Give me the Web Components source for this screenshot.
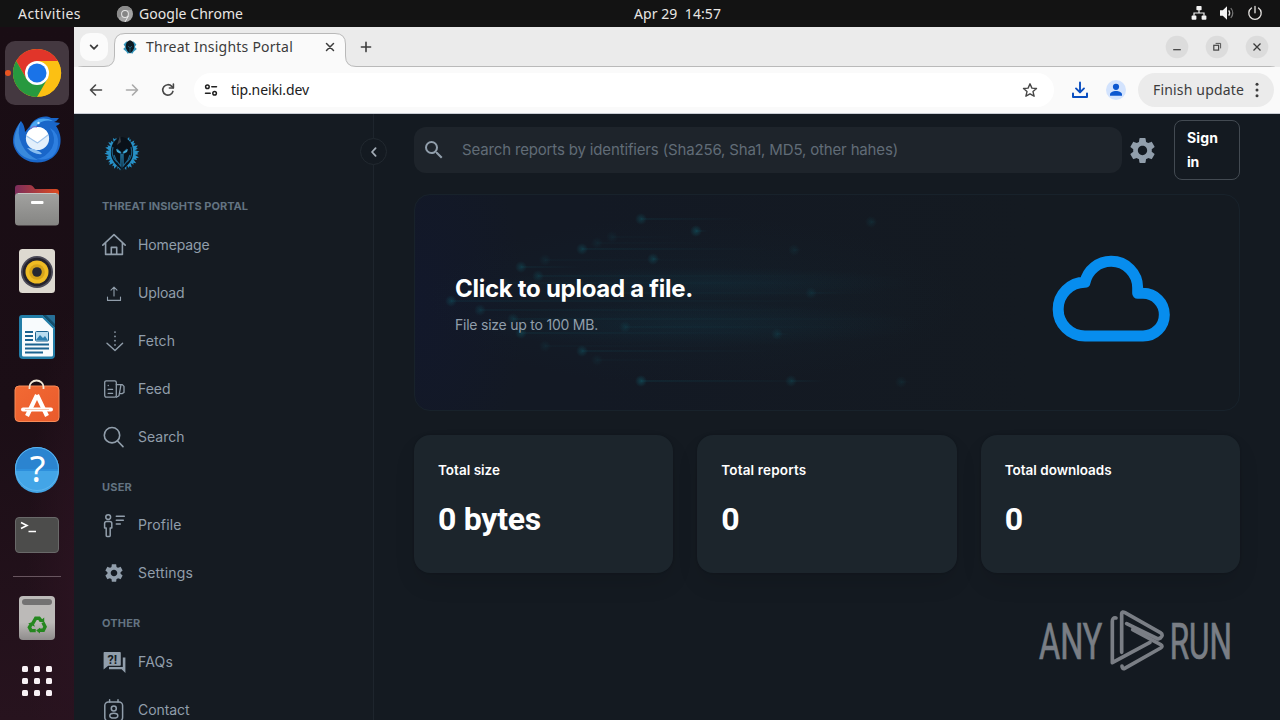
<!DOCTYPE html>
<html lang="en">
<head>
<meta charset="utf-8">
<title>Threat Insights Portal</title>
<style>
  html, body { margin: 0; height: 100%; overflow: hidden; background: #141a21; }
</style>
</head>
<body>
<desktop-shell></desktop-shell>

<script>
// ═══════════════════════════════════════════════════════════════
// Icons — name → [viewBox, body], drawn by <ui-icon>
// ═══════════════════════════════════════════════════════════════

const COG = 'M19.14 12.94c.04-.3.06-.61.06-.94 0-.32-.02-.64-.07-.94l2.03-1.58c.18-.14.23-.41.12-.61l-1.92-3.32c-.12-.22-.37-.29-.59-.22l-2.39.96c-.5-.38-1.03-.7-1.62-.94l-.36-2.54c-.04-.24-.24-.41-.48-.41h-3.84c-.24 0-.43.17-.47.41l-.36 2.54c-.59.24-1.13.57-1.62.94l-2.39-.96c-.22-.08-.47 0-.59.22L2.74 8.87c-.12.21-.08.47.12.61l2.03 1.58c-.05.3-.09.63-.09.94s.02.64.07.94l-2.03 1.58c-.18.14-.23.41-.12.61l1.92 3.32c.12.22.37.29.59.22l2.39-.96c.5.38 1.03.7 1.62.94l.36 2.54c.05.24.24.41.48.41h3.84c.24 0 .44-.17.47-.41l.36-2.54c.59-.24 1.13-.56 1.62-.94l2.39.96c.22.08.47 0 .59-.22l1.92-3.32c.12-.22.07-.47-.12-.61l-2.01-1.58zM12 15.6c-1.98 0-3.6-1.62-3.6-3.6s1.62-3.6 3.6-3.6 3.6 1.62 3.6 3.6-1.62 3.6-3.6 3.6z';

const line = (body, w = 1.5) =>
  `<g fill="none" stroke="currentColor" stroke-width="${w}" stroke-linecap="round" stroke-linejoin="round">${body}</g>`;

const spikes = Array.from({ length: 16 }, (_, i) => {
  const a = 28 + i * 20.3;
  return `<path d="M-3.2-10 L-1.2-17.5 L.4-15 L1.6-16.5 L2.8-10z" transform="rotate(${a})"/>`;
}).join('');

const ICONS = {
  // sidebar
  home: ['0 0 24 24', line('<path d="M.8 12.1 12 1.6l11.2 10.5M3.6 10.2v11.2h16.8V10.2M9.3 21v-6.6h5.4V21"/>', 1.6)],
  upload: ['0 0 24 24', line('<path d="M5.5 16v3.4h13V16M12 15V6.4M9 9.2l3-3 3 3"/>', 1.1)],
  fetch: ['0 0 24 24', line('<path d="M5 14.2l8 7.2 7.6-7.2" stroke-width="1.4"/><path d="M13 3v17" stroke-dasharray=".1 4.2" stroke-width="1.7"/>')],
  feed: ['0 0 24 24', line('<rect x="2.7" y="3.8" width="11.6" height="16.4" rx="1.6"/><path d="M14.3 7.6h6l1.7 1.8v6.1l-2 1.1h-2.2M14.3 20.2l2.7-1.5 2-11M6.2 8.5h.1M6.2 12.4h4.4M6.2 16.4h4.4"/>', 1.3)],
  search: ['0 0 24 24', line('<circle cx="10" cy="10.2" r="7.7"/><path d="m15.600 16 5.400 5.600"/>', 1.6)],
  profile: ['0 0 24 24', line('<circle cx="6.2" cy="4.1" r="2.4"/><path d="M4.2 22.600v-7.600H2.600v-4.500c0-1.200.8-1.900 2-1.900h3.200c1.200 0 2 .7 2 1.900v4.500H8.200v7.600c0 .5-.2.800-.8.800H5c-.6 0-.8-.3-.8-.8z"/><path d="M14.300 3.200h8M14.300 7.200h7M14.300 11h4"/>', 1.5)],
  cog: ['0 0 24 24', `<path fill="currentColor" d="${COG}"/>`],
  faq: ['0 0 24 24', '<path fill="currentColor" d="M2.6 2h15.2c.6 0 1 .4 1 1v11.8c0 .6-.4 1-1 1H6.2L1.600 19.600V3c0-.6.4-1 1-1z"/><path fill="currentColor" d="M20.800 7.500h2.600v15.600l-3.800-3.800H7v-2.200h13.800z"/><text x="10.400" y="13.600" text-anchor="middle" font-family="Roboto, sans-serif" font-weight="700" font-size="12.500" fill="#161c23">?!</text>'],
  contact: ['0 0 24 24', line('<rect x="2.8" y="4" width="17.800" height="19" rx="3.600"/><path d="M7.600 1.800V4M16 1.800V4"/><circle cx="11.800" cy="10.600" r="2.500"/><ellipse cx="11.800" cy="17.700" rx="4" ry="2.400"/>', 1.5)],
  chevron: ['0 0 16 16', line('<path d="M9.6 4.2 6 8l3.6 3.8"/>', 1.8)],
  magnify: ['0 0 24 24', '<path fill="currentColor" d="M15.5 14h-.79l-.28-.27A6.47 6.47 0 0 0 16 9.5 6.5 6.5 0 1 0 9.5 16c1.61 0 3.09-.59 4.23-1.57l.27.28v.79l5 4.99L20.49 19zm-6 0A4.5 4.5 0 1 1 14 9.5 4.5 4.5 0 0 1 9.5 14z"/>'],
  cloud: ['630 415 366 272', '<path fill="none" stroke="#078dee" stroke-width="33" stroke-linejoin="round" d="M735 664H909A64 64 0 0 0 909 536H893V519A79 79 0 0 0 814 440A80 80 0 0 0 735 503A80.500 80.500 0 0 0 735 664z"/>'],
  logo: ['-18 -18 36 36', `<g fill="#2790c6">${spikes}</g><path d="M0-16C8-15 12-7 11 2 10 8 6 12 0 17-6 12-10 8-11 2-12-7-8-15 0-16z" fill="#0a1119"/><path d="M-9-6Q-12 3-5 9M9-6Q12 3 5 9" fill="none" stroke="#1d5f83" stroke-width="1.2"/><path d="M-5-4-1.2-.2V13L-6 7-8 2M5-4 1.2-.2V13L6 7 8 2" fill="none" stroke="#1b658e" stroke-width="1.2"/><path d="M-6-4-1-1-2 .6-5-1zM6-4 1-1 2 .6 5-1z" fill="#40a9d6"/><path d="M-.8 1h1.6L0 18z" fill="#277aa3"/><path d="M-2-17-5-8-1-11z" fill="#3a3f45"/>`],

  // browser
  down: ['0 0 16 16', line('<path d="M4.6 6.4 8 9.8l3.4-3.4"/>', 1.7)],
  close: ['0 0 16 16', line('<path d="m4.5 4.5 7 7m0-7-7 7"/>', 1.5)],
  plus: ['0 0 16 16', line('<path d="M8 3.400v9.200M3.400 8h9.200"/>', 1.6)],
  back: ['0 0 16 16', line('<path d="M13.5 8h-11M7.5 3 2.5 8l5 5"/>', 1.6)],
  forward: ['0 0 16 16', line('<path d="M2.5 8h11M8.5 3l5 5-5 5"/>', 1.6)],
  reload: ['0 0 16 16', line('<path d="M12.9 9.4A5.2 5.2 0 1 1 11.8 4.4l1.4 1.3"/><path d="M13.4 2v4H9.4"/>', 1.6)],
  tune: ['0 0 16 16', line('<circle cx="4.4" cy="4.8" r="1.8"/><path d="M8.8 4.8h4.7M2.5 11.2h4.7"/><circle cx="11.6" cy="11.2" r="1.8"/>', 1.5)],
  star: ['0 0 16 16', line('<path d="m8 1.8 1.9 4.3 4.6.4-3.5 3.1 1.1 4.6L8 11.8l-4.1 2.4L5 9.6 1.5 6.5l4.6-.4z"/>', 1.4)],
  download: ['0 0 18 18', line('<path d="M9 1.5v9.6M5 7.4l4 4 4-4"/><path d="M2 12.5V16h14v-3.5" stroke-width="2"/>', 1.9)],
  person: ['0 0 20 20', '<circle cx="10" cy="10" r="10" fill="#d3e3fd"/><circle cx="10" cy="6.8" r="3.1" fill="#0b57d0"/><path d="M4 15.8v-1.3c0-2.4 3-3.6 6-3.6s6 1.2 6 3.6v1.3z" fill="#0b57d0"/>'],
  dots: ['0 0 16 16', '<g fill="currentColor"><circle cx="8" cy="2.3" r="1.5"/><circle cx="8" cy="8" r="1.5"/><circle cx="8" cy="13.7" r="1.5"/></g>'],
  min: ['0 0 24 24', '<circle cx="12" cy="12" r="11.3" fill="#dcdcdc"/><path d="M8.2 14.7h7.6" stroke="#3a3a3a" stroke-width="1.2"/>'],
  restore: ['0 0 24 24', '<circle cx="12" cy="12" r="11.3" fill="#dcdcdc"/><g fill="none" stroke="#444" stroke-width="1.2"><rect x="8.8" y="10.3" width="4.8" height="4.8"/><path d="M10.6 8.4h5v5" stroke-width=".9"/></g>'],
  shut: ['0 0 24 24', '<circle cx="12" cy="12" r="11.3" fill="#dcdcdc"/><path d="m8.5 8.5 7 7m0-7-7 7" stroke="#3a3a3a" stroke-width="1.3"/>'],
  favicon: ['-20 -20 40 40', '<path d="M-16-6-12 0-17 5-9 12-6 17 0 14 6 17 9 12 17 5 12 0 16-6 9-14 0-12-9-14z" fill="#3496bd"/><path d="M0-17C9-15 12-5 10 3 8 9 5 12 0 16-5 12-8 9-10 3-12-5-9-15 0-17z" fill="#0b1922"/><path d="M-5-2 0 2 5-2M0 3v12" stroke="#226b8c" stroke-width="2" fill="none"/>'],

  // panel
  chromeMono: ['-8 -8 16 16', '<circle r="8" fill="#a3a3a3"/><path d="M0-8A8 8 0 0 0-7 4L-3 2A4 4 0 0 1 0-4H7A8 8 0 0 0 0-8z" fill="#8a8a8a"/><circle r="3.9" fill="#e6e6e6"/><circle r="2.9" fill="#858585"/><path d="M3.5 1.8 0 8" stroke="#e6e6e6"/>'],
  network: ['0 0 16 16', '<g fill="#f2f2f2"><rect x="5.4" y="1" width="5.2" height="4.2" rx=".8"/><rect x=".6" y="10.6" width="4.8" height="4.2" rx=".8"/><rect x="10.6" y="10.6" width="4.8" height="4.2" rx=".8"/></g><path d="M8 5v3M3 10.8V8h10v2.8" fill="none" stroke="#f2f2f2" stroke-width="1.2"/>'],
  volume: ['0 0 16 16', '<path d="M1 5.3h2.8L8 1.2v13.6l-4.2-4.1H1z" fill="#f2f2f2"/><path d="M9.7 5.3q2 2.7 0 5.4" fill="none" stroke="#ddd" stroke-width="1.3"/><path d="M11.8 3q4 5 0 10" fill="none" stroke="#777" stroke-width="1.2"/>'],
  power: ['0 0 16 16', line('<path d="M8 1.4v6.4M4.5 3A6.2 6.2 0 1 0 11.5 3"/>', 1.3)],

  // dock
  chrome: ['-24 -24 48 48', '<circle r="24" fill="#fbbc05"/><path d="M-20.8-12A24 24 0 0 1 20.8-12H0L-10.4 6z" fill="#e1352a"/><path d="M-20.8-12A24 24 0 0 0 3 23.8L10.4 6-10.4 6z" fill="#27993f"/><path d="M20.8-12A24 24 0 0 1 0 24L10.4 6 0-12z" fill="#fcc013"/><circle r="12" fill="#fff"/><circle r="9.5" fill="#1a73e8"/>'],
  thunderbird: ['0 -1 48 48', '<path d="M8 5Q12 10 12 16L17 10C20 3 31-2 38 2L46 2Q44 5 41 6L47 7Q46 9 43 10C51 21 48 36 39 42 26 51 8 46 2 33-2 25 0 15 8 5z" fill="#1966c9"/><path d="M8 5Q3 17 9 29 14 39 25 44 9 44 3 32-2 22 8 5z" fill="#3989dc"/><path d="M17 12C20 3 30 0 40 5 30 3 24 7 22 13z" fill="#4ba5ef"/><path d="M37 12Q44 22 39 32 33 42 23 43 43 46 45 28 46 17 37 12z" fill="#2e7fe0"/><circle cx="24.5" cy="22.5" r="11.6" fill="#e2effb"/><path d="m13.5 19 11 9 10.5-10q-3-7-11-7-8 1-10.500 8z" fill="#fff"/><path d="m13.5 20 11 7 10.500-8" fill="none" stroke="#a0c5ec" stroke-width="1.1"/><path d="M20 33Q27 35 29 38 21 39 14 32z" fill="#88bdf0"/><circle cx="25.500" cy="7" r="1.200" fill="#d8efff"/><path d="M17 13Q20 9 24 11" fill="none" stroke="#8964c4"/>'],
  files: ['0 0 48 48', '<defs><linearGradient id="f"><stop stop-color="#7b2d5c"/><stop offset="1" stop-color="#df4b1f"/></linearGradient><linearGradient id="g" x2="0" y2="1"><stop stop-color="#a2a2a0"/><stop offset="1" stop-color="#858583"/></linearGradient></defs><path d="M2 14V7q0-3 3-3h12q2 0 3 1.500L22 8h21q3 0 3 3v8H2z" fill="url(#f)"/><rect x="2" y="12" width="44" height="32.500" rx="3.500" fill="url(#g)"/><path d="M5 12.500h38" stroke="#c6c6c4"/><rect x="18" y="20" width="12.500" height="3" rx="1" fill="#fff"/>'],
  music: ['0 0 48 48', '<rect x="6" y="2" width="36" height="44" rx="3.500" fill="#ddd9d0"/><circle cx="24" cy="25" r="16" fill="#4b4a57"/><circle cx="24" cy="25" r="14.200" fill="#25232c"/><circle cx="24" cy="25" r="11.500" fill="#efbc24"/><circle cx="24" cy="25" r="7.800" fill="#d5a31a"/><circle cx="24" cy="25" r="4.800" fill="#252832"/>'],
  writer: ['0 0 48 48', '<path d="M9 2h21l12 12v28q0 4-4 4H10q-4 0-4-4V5q0-3 3-3z" fill="#237da7"/><path d="M9.500 5h20L40 15.500V42q0 1.500-1.500 1.500h-28Q9 43.500 9 42V5.500z" fill="#f8fbfd"/><path d="M30 2h11q1 0 1 1v11z" fill="#13506f"/><path d="M33 2h8q1 0 1 1v8z" fill="#276f97"/><g stroke="#1b6390" stroke-width="2"><path d="M12 19h8M12 23h8M12 27h8M12 31.500h24M12 35.500h24M12 39.500h18"/></g><rect x="22.500" y="18.500" width="13" height="9.500" rx="1" fill="#b8dcf0" stroke="#1b6390"/><path d="m23 27 4-5 3 3 2-2 3 4.500z" fill="#2b7eaf"/>'],
  software: ['0 0 48 48', '<defs><linearGradient id="s" x2="1" y2="1"><stop stop-color="#f26a34"/><stop offset="1" stop-color="#e95a2b"/></linearGradient></defs><rect x="2" y="7" width="44" height="35.500" rx="4" fill="url(#s)" stroke="#f78b58"/><path d="M16.500 10V8a7 6.500 0 0 1 14 0v2" fill="none" stroke="#f3e8d6" stroke-width="1.800"/><path d="M14 37 24 16M34 37 24 16" stroke="#fff" stroke-width="4.200"/><path d="M10 30.500h28" stroke="#fff" stroke-width="4" stroke-linecap="round"/><path d="M12 30.500h24" stroke="#efb497" stroke-width=".700"/>'],
  help: ['0 0 48 48', '<circle cx="24" cy="24" r="22" fill="#2d8fdc"/><path d="M2 24a22 22 0 0 1 44 0z" fill="#2b84d0"/><path d="M2 26h44A22 22 0 0 1 2 26z" fill="#43a5e7"/><circle cx="24" cy="24" r="21.500" fill="none" stroke="#5db5ee"/><text x="24.500" y="37" text-anchor="middle" font-family="Noto Sans, sans-serif" font-size="36" fill="#fff">?</text>'],
  terminal: ['0 0 48 48', '<rect x="2.500" y="6.500" width="43" height="35" rx="3.500" fill="#4c4c4b" stroke="#696969"/><path d="m8 11.500 6 3-6 3M15.500 20.500H23" fill="none" stroke="#fff" stroke-width="1.600"/>'],
  trash: ['0 0 48 48', '<defs><linearGradient id="t" x2="0" y2="1"><stop offset=".6" stop-color="#bcbab8"/><stop offset="1" stop-color="#8f8c8c"/></linearGradient></defs><rect x="6" y="2" width="36" height="44" rx="4" fill="url(#t)"/><rect x="9" y="5" width="30" height="6" rx="3" fill="#737272"/><g transform="translate(3.600 5.600) scale(.85)"><g fill="none" stroke="#25871f" stroke-width="4"><path d="m19 28 3.500-6h4L29 25"/><path d="m31 27 2.500 5-2 4h-5"/><path d="M22.500 36.500H17l-2-4 2.500-4"/></g><path d="m26.500 26 6 1V21zM27.500 33v7L23 36.500zM13.500 28l6-2 2 6z" fill="#25871f"/></g>'],
  apps: ['0 0 48 48', [9, 21, 33].map(y => [9, 21, 33].map(x => `<rect x="${x}" y="${y}" width="6" height="6" rx="1.500" fill="#f8f1f5"/>`).join('')).join('')],
};

// ═══════════════════════════════════════════════════════════════
// Base
// ═══════════════════════════════════════════════════════════════

class BaseView extends HTMLElement {
  constructor() {
    super();
    this.attachShadow({ mode: 'open' });
  }

  connectedCallback() {
    this.shadowRoot.innerHTML = `<style>:host { box-sizing: border-box; } *, *::before { box-sizing: border-box; } ${this.styles()}</style>${this.markup()}`;
  }

  styles() { return ''; }
  markup() { return '<slot></slot>'; }
}

// <ui-icon name size>
class UiIcon extends BaseView {
  styles() {
    return `:host { display: block; flex-shrink: 0; } svg { display: block; overflow: visible; }`;
  }
  markup() {
    const [box, body] = ICONS[this.getAttribute('name')];
    const w = this.getAttribute('size') || 16;
    const h = this.getAttribute('height') || w;
    return `<svg width="${w}" height="${h}" viewBox="${box}" aria-hidden="true">${body}</svg>`;
  }
}

// <fit-text w> — tracks its text in or out until it is w pixels wide
class FitText extends BaseView {
  connectedCallback() {
    super.connectedCallback();
    const want = parseFloat(this.getAttribute('w'));
    const have = this.getBoundingClientRect().width;
    if (want && have) this.style.letterSpacing = `${(want - have) / this.textContent.length}px`;
  }
  styles() {
    return `:host { display: inline-block; flex-shrink: 0; white-space: pre; letter-spacing: 0; }`;
  }
}

// ═══════════════════════════════════════════════════════════════
// Desktop
// ═══════════════════════════════════════════════════════════════

class DesktopShell extends BaseView {
  styles() {
    return `
      :host { display: grid; grid-template: 27px 693px / 74px 1206px; width: 1280px; height: 720px; overflow: hidden;
        font-family: 'Noto Sans', 'Open Sans', sans-serif; }
      top-panel { grid-column: 1 / -1; }
    `;
  }
  markup() {
    return `<top-panel></top-panel><app-dock></app-dock><browser-window></browser-window>`;
  }
}

class TopPanel extends BaseView {
  styles() {
    return `
      :host { display: grid; grid-template-columns: 616px auto 1fr; align-items: center; background: #131313; color: #e8e6e3;
        font-size: 14px; padding: 0 17px 0 18px; }
      div { display: flex; align-items: center; }
      .app { gap: 6px; margin-left: 36px; }
      .clock { padding-bottom: 1px; }
      .tray { justify-content: flex-end; gap: 12px; padding-bottom: 1px; }
    `;
  }
  markup() {
    return `
      <div><fit-text w="63">Activities</fit-text>
        <div class="app"><ui-icon name="chromeMono" size="16"></ui-icon><fit-text w="104">Google Chrome</fit-text></div></div>
      <fit-text class="clock" w="87">Apr 29  14:57</fit-text>
      <div class="tray"><ui-icon name="network"></ui-icon><ui-icon name="volume"></ui-icon><ui-icon name="power"></ui-icon></div>
    `;
  }
}

class AppDock extends BaseView {
  styles() {
    return `
      :host { display: flex; flex-direction: column; align-items: center; gap: 2px; padding-top: 14px; overflow: hidden;
        background: radial-gradient(ellipse 50px 300px at 76px 580px, #2a1320, transparent), linear-gradient(#190d14, #1b0e16 55%, #27131e); }
      hr { width: 48px; height: 1px; margin: 7px 0 7px; border: 0; background: #68555f; }
      .apps { margin-top: -3px; }
    `;
  }
  markup() {
    const names = ['thunderbird', 'files', 'music', 'writer', 'software', 'help', 'terminal'];
    return `
      <dock-item active><ui-icon name="chrome" size="48"></ui-icon></dock-item>
      ${names.map(n => `<dock-item><ui-icon name="${n}" size="48"></ui-icon></dock-item>`).join('')}
      <hr>
      <dock-item><ui-icon name="trash" size="48"></ui-icon></dock-item>
      <dock-item class="apps"><ui-icon name="apps" size="48"></ui-icon></dock-item>
    `;
  }
}

class DockItem extends BaseView {
  styles() {
    return `
      :host { display: grid; place-items: center; position: relative; width: 64px; height: 64px; flex-shrink: 0; border-radius: 10px; }
      :host([active]) { background: #443840; }
      :host([active])::before { content: ''; position: absolute; left: 0; top: 29px; width: 6px; height: 6px; border-radius: 50%; background: #e95420; }
    `;
  }
}

// ═══════════════════════════════════════════════════════════════
// Browser
// ═══════════════════════════════════════════════════════════════

class BrowserWindow extends BaseView {
  styles() {
    return `:host { display: grid; grid-template-rows: 40px 47px 1fr; overflow: hidden; min-height: 0; }`;
  }
  markup() {
    return `<tab-strip></tab-strip><address-bar></address-bar><portal-page></portal-page>`;
  }
}

class TabStrip extends BaseView {
  styles() {
    return `
      :host { display: flex; align-items: center; position: relative; background: #ebebeb; color: #3c3c3c; padding: 0 11px 0 6px; }
      .shape { position: absolute; left: 0; top: 0; }
      .list, .tab, ui-icon { position: relative; }
      .list { display: grid; place-items: center; width: 28px; height: 28px; border-radius: 10px; background: #fbfbfb; }
      .tab { display: flex; align-items: center; width: 232px; margin-left: 6px; padding: 0 8px; font-size: 14px; }
      .tab fit-text { margin-left: 8px; padding-bottom: 2px; }
      .tab ui-icon:last-child { margin-left: auto; }
      .plus { margin-left: 12px; }
      .wins { display: flex; gap: 16px; margin-left: auto; }
    `;
  }
  markup() {
    return `
      <svg class="shape" width="1206" height="40">
        <path d="M-1 47Q0 39.500 9 39.500H30Q40.500 39.500 40.500 29V17Q40.500 6.500 51 6.500H261Q271.500 6.500 271.500 17V29Q271.500 39.500 282 39.500H1196Q1205 39.500 1207 47" fill="#fafafa" stroke="#b9b9b9"/>
      </svg>
      <div class="list"><ui-icon name="down"></ui-icon></div>
      <div class="tab"><ui-icon name="favicon" size="16"></ui-icon><fit-text w="147">Threat Insights Portal</fit-text><ui-icon name="close"></ui-icon></div>
      <ui-icon class="plus" name="plus"></ui-icon>
      <div class="wins"><ui-icon name="min" size="24"></ui-icon><ui-icon name="restore" size="24"></ui-icon><ui-icon name="shut" size="24"></ui-icon></div>
    `;
  }
}

class AddressBar extends BaseView {
  styles() {
    return `
      :host { display: flex; align-items: center; background: #fafafa; color: #474747; padding: 0 6px 0 14px; font-size: 14px;
        border-bottom: 1px solid #c8ccd4; }
      fit-text { padding-bottom: 2px; }
      .off { color: #a9a9a9; }
      .nav { display: flex; gap: 20px; }
      .omni { display: flex; align-items: center; width: 860px; height: 34px; margin-left: 18px; padding: 0 16px 0 9px; border-radius: 17px; background: #fff; color: #202020; }
      .omni fit-text { margin-left: 12px; }
      .omni .star { margin-left: auto; color: #474747; }
      .dl { color: #0b4fc0; margin-left: 17px; }
      .me { margin-left: 17px; }
      .update { display: flex; align-items: center; height: 34px; width: 136px; margin-left: 12px; padding: 0 9px 0 15px; border-radius: 17px; background: #ebebeb; color: #3c3c3c; }
      .update ui-icon { margin-left: auto; }
    `;
  }
  markup() {
    return `
      <div class="nav"><ui-icon name="back"></ui-icon><ui-icon class="off" name="forward"></ui-icon><ui-icon name="reload"></ui-icon></div>
      <div class="omni"><ui-icon name="tune"></ui-icon><fit-text w="78">tip.neiki.dev</fit-text><ui-icon class="star" name="star"></ui-icon></div>
      <ui-icon class="dl" name="download" size="18"></ui-icon>
      <ui-icon class="me" name="person" size="20"></ui-icon>
      <div class="update"><fit-text w="91">Finish update</fit-text><ui-icon name="dots"></ui-icon></div>
    `;
  }
}

// ═══════════════════════════════════════════════════════════════
// Portal
// ═══════════════════════════════════════════════════════════════

class PortalPage extends BaseView {
  styles() {
    return `
      :host { display: grid; grid-template-columns: 300px 906px; background: #141a21; position: relative; overflow: hidden; min-height: 0;
        font-family: Inter, 'Liberation Sans', sans-serif; color: #fff; }
      main { display: flex; flex-direction: column; padding: 6px 40px 0; }
      .stats { display: grid; grid-template-columns: repeat(3, 1fr); gap: 24px; margin-top: 24px; }
      run-watermark { position: absolute; right: 40px; bottom: 42px; }
    `;
  }
  markup() {
    return `
      <portal-sidebar></portal-sidebar>
      <main>
        <portal-header></portal-header>
        <upload-hero></upload-hero>
        <div class="stats">
          <stat-card><fit-text w="62" slot="label">Total size</fit-text><fit-text w="103">0 bytes</fit-text></stat-card>
          <stat-card><fit-text w="85" slot="label">Total reports</fit-text>0</stat-card>
          <stat-card><fit-text w="107" slot="label">Total downloads</fit-text>0</stat-card>
        </div>
      </main>
      <run-watermark></run-watermark>
    `;
  }
}

class PortalSidebar extends BaseView {
  styles() {
    return `
      :host { display: block; position: relative; background: #151b22; border-right: 1px solid #1e252d; padding: 21px 28px 0; min-height: 0; }
      .logo { margin-left: 2px; }
      .toggle { position: absolute; right: -14px; top: 24px; display: grid; place-items: center; width: 27px; height: 27px;
        border: 1px solid #222930; border-radius: 50%; background: #141a21; color: #a3acb6; }
      h6 { margin: 0; height: 41px; padding-top: 19px; font-size: 11px; line-height: 14px; font-weight: 700; color: #637381; }
      h6.first { margin-top: 9px; height: 40.5px; }
      h6.user { height: 40px; }
    `;
  }
  markup() {
    const item = ([icon, label, w]) => `<nav-item><ui-icon slot="icon" name="${icon}" size="${icon === 'cog' ? 22 : 24}"></ui-icon><fit-text w="${w}">${label}</fit-text></nav-item>`;
    return `
      <ui-icon class="logo" name="logo" size="36"></ui-icon>
      <div class="toggle"><ui-icon name="chevron"></ui-icon></div>
      <h6 class="first"><fit-text w="146">THREAT INSIGHTS PORTAL</fit-text></h6>
      ${[['home', 'Homepage', 71.5], ['upload', 'Upload', 46.5], ['fetch', 'Fetch', 37], ['feed', 'Feed', 32.5], ['search', 'Search', 46.5]].map(item).join('')}
      <h6 class="user"><fit-text w="30">USER</fit-text></h6>
      ${[['profile', 'Profile', 43.5], ['cog', 'Settings', 55]].map(item).join('')}
      <h6><fit-text w="38.5">OTHER</fit-text></h6>
      ${[['faq', 'FAQs', 35], ['contact', 'Contact', 51.5]].map(item).join('')}
    `;
  }
}

class NavItem extends BaseView {
  styles() {
    return `
      :host { display: flex; align-items: center; gap: 12px; height: 48px; color: #919eab; font-size: 14px; }
      .icon { display: grid; place-items: center; width: 24px; height: 24px; }
    `;
  }
  markup() {
    return `<span class="icon"><slot name="icon"></slot></span><slot></slot>`;
  }
}

class PortalHeader extends BaseView {
  styles() {
    return `
      :host { display: flex; align-items: center; height: 60px; }
      .search { display: flex; align-items: center; width: 708px; height: 46px; padding-left: 8px; border-radius: 12px; background: #1e242b; color: #919eab; }
      .search fit-text { margin-left: 16px; padding-bottom: 2px; font-size: 15px; color: #616c77; }
      .cog { margin-left: 5px; color: #919eab; }
      button { flex-shrink: 0; margin: 0 0 0 16px; width: 66px; height: 60px; padding: 0 12px; text-align: left; background: none; color: #fff;
        border: 1px solid #434a52; border-radius: 8px; font: 700 14px/24px Inter, sans-serif; }
      button fit-text { display: block; width: max-content; }
    `;
  }
  markup() {
    return `
      <div class="search"><ui-icon name="magnify" size="24"></ui-icon><fit-text w="436">Search reports by identifiers (Sha256, Sha1, MD5, other hahes)</fit-text></div>
      <ui-icon class="cog" name="cog" size="31"></ui-icon>
      <button><fit-text w="31">Sign</fit-text><fit-text w="12">in</fit-text></button>
    `;
  }
}

// Dots and streaks behind the upload text: x, y, streak length, strength
const TRAILS = [
  [226, 24, 105, 1], [281, 36, 12, 1.2], [197, 42, 70, .35], [167, 54, 190, 1], [182, 48, 120, .35],
  [106, 72, 60, 1], [130, 65, 210, .4], [238, 64, 8, 1], [123, 81, 300, .8], [90, 88, 340, .5],
  [36, 106, 390, 1], [65, 115, 350, .8], [98, 124, 410, .8], [106, 138, 250, 1], [130, 151, 220, .4],
  [167, 156, 190, 1], [182, 165, 100, .35], [226, 186, 190, 1.3], [376, 186, 30, .8], [170, 98, 310, .6],
  [210, 132, 240, .6], [379, 55, 8, .4], [396, 98, 30, .5], [362, 139, 12, .6], [456, 27, 6, .5], [486, 187, 10, .4],
];

class UploadHero extends BaseView {
  styles() {
    return `
      :host { display: flex; align-items: center; justify-content: space-between; position: relative; height: 217px; margin-top: 14px;
        padding: 0 67px 0 40px; border: 1px solid #18222b; border-radius: 16px; overflow: hidden;
        background: radial-gradient(ellipse 110px 210px at 0 50%, #12182b, transparent), linear-gradient(90deg, #131924 20%, #141a21 75%); }
      .trails { position: absolute; inset: 0; }
      .copy { position: relative; display: flex; flex-direction: column; align-items: flex-start; gap: 9px; padding-top: 1px; }
      .title { font-size: 24px; line-height: 34px; font-weight: 700; }
      .sub { font-size: 14px; line-height: 20px; color: #919eab; }
      ui-icon { margin-top: -8px; }
    `;
  }
  markup() {
    const trails = TRAILS.map(([x, y, len, s]) => `
      <path d="M${x} ${y}h${len}v.1" stroke="url(#fade)" stroke-width="1.5" opacity="${.15 * s}"/>
      <circle cx="${x}" cy="${y}" r="6" fill="url(#dot)" opacity="${.32 * s}"/>`).join('');
    return `
      <svg class="trails" width="826" height="217" fill="none">
        <defs>
          <linearGradient id="fade"><stop stop-color="#0e6776"/><stop offset="1" stop-color="#0e6776" stop-opacity="0"/></linearGradient>
          <radialGradient id="dot"><stop stop-color="#0f7280"/><stop offset="1" stop-color="#0f7280" stop-opacity="0"/></radialGradient>
          <radialGradient id="haze"><stop stop-color="#104050" stop-opacity=".22"/><stop offset="1" stop-color="#104050" stop-opacity="0"/></radialGradient>
        </defs>
        <ellipse cx="290" cy="88" rx="210" ry="16" fill="url(#haze)"/>
        <ellipse cx="280" cy="130" rx="230" ry="22" fill="url(#haze)"/>
        <ellipse cx="280" cy="106" rx="270" ry="85" fill="url(#haze)" opacity=".5"/>
        ${trails}
      </svg>
      <div class="copy"><fit-text class="title" w="238">Click to upload a file.</fit-text><fit-text class="sub" w="143">File size up to 100 MB.</fit-text></div>
      <ui-icon name="cloud" size="122" height="90.67"></ui-icon>
    `;
  }
}

class StatCard extends BaseView {
  styles() {
    return `
      :host { display: flex; flex-direction: column; gap: 15px; height: 138px; padding: 24px; border-radius: 16px; background: #1c252c;
        box-shadow: 0 0 2px rgba(0,0,0,.2), 0 12px 24px -4px rgba(0,0,0,.12); }
      .label { font-size: 13.5px; line-height: 22px; font-weight: 600; }
      .value { font: 700 32px/48px Roboto, sans-serif; margin-top: -1px; }
    `;
  }
  markup() {
    return `<div class="label"><slot name="label"></slot></div><div class="value"><slot></slot></div>`;
  }
}

class RunWatermark extends BaseView {
  styles() {
    return `:host { display: block; width: 202px; height: 74px; opacity: .5; } svg { display: block; overflow: visible; }`;
  }
  markup() {
    // drawn on a 3x grid, shrunk by the viewBox
    return `
      <svg width="202" height="74" viewBox="54 42 606 222" fill="#dfe2e8">
        <g font-family="Roboto, sans-serif" font-size="150" stroke="#dfe2e8" stroke-width="2">
          <text transform="translate(57 206) scale(.66 1)" textLength="288" lengthAdjust="spacingAndGlyphs">ANY</text>
          <text transform="translate(449 206) scale(.66 1)" textLength="283" lengthAdjust="spacingAndGlyphs">RUN</text>
        </g>
        <g fill="none" stroke="#dfe2e8" stroke-width="11" stroke-linejoin="round" stroke-linecap="round">
          <path d="M288 84Q277 82 277 94V218L390 157"/>
          <path d="M305 187V70Q306 63 315 68L421 128Q432 135 421 144L414 147L320 101"/>
          <path d="M338 119 422 164Q430 169 422 174L314 235Q307 239 306 228"/>
        </g>
      </svg>
    `;
  }
}

customElements.define('desktop-shell', DesktopShell);
customElements.define('top-panel', TopPanel);
customElements.define('app-dock', AppDock);
customElements.define('dock-item', DockItem);
customElements.define('browser-window', BrowserWindow);
customElements.define('tab-strip', TabStrip);
customElements.define('address-bar', AddressBar);
customElements.define('portal-page', PortalPage);
customElements.define('portal-sidebar', PortalSidebar);
customElements.define('nav-item', NavItem);
customElements.define('portal-header', PortalHeader);
customElements.define('upload-hero', UploadHero);
customElements.define('stat-card', StatCard);
customElements.define('run-watermark', RunWatermark);
customElements.define('ui-icon', UiIcon);
// last, so every text is measured in its final box
customElements.define('fit-text', FitText);
</script>
</body>
</html>
